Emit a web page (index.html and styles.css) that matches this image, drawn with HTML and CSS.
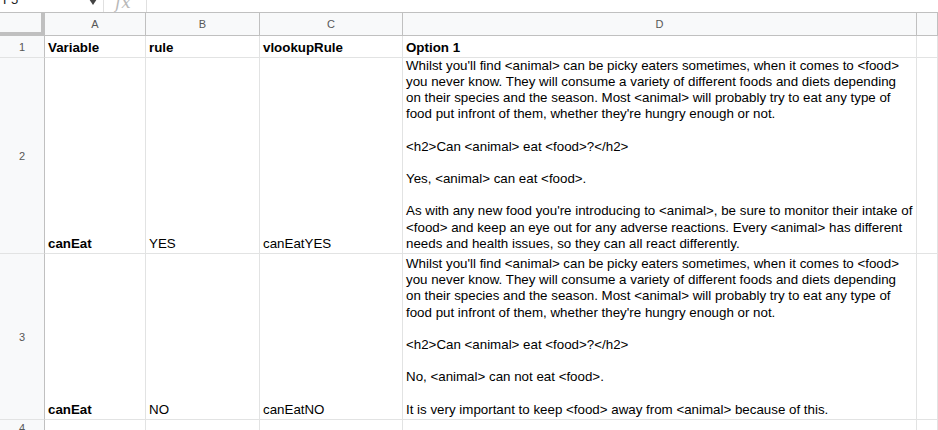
FILE: index.html
```html
<!DOCTYPE html>
<html>
<head>
<meta charset="utf-8">
<link rel="stylesheet" href="styles.css">
</head>
<body>
<div class="toolbar">
  <div class="namebox"><span class="name">F5</span><span class="caret"></span></div>
  <div class="fxbox"><span class="fx">fx</span></div>
  <div class="formula"></div>
</div>
<div class="grid">
  <div class="corner"></div>
  <div class="ch">A</div>
  <div class="ch">B</div>
  <div class="ch">C</div>
  <div class="ch">D</div>
  <div class="ch"></div>

  <div class="rh">1</div>
  <div class="cell bold">Variable</div>
  <div class="cell bold">rule</div>
  <div class="cell bold">vlookupRule</div>
  <div class="cell bold">Option 1</div>
  <div class="cell"></div>

  <div class="rh">2</div>
  <div class="cell bold">canEat</div>
  <div class="cell">YES</div>
  <div class="cell">canEatYES</div>
  <div class="cell"><div class="wrap">Whilst you'll find &lt;animal&gt; can be picky eaters sometimes, when it comes to &lt;food&gt;
you never know. They will consume a variety of different foods and diets depending
on their species and the season. Most &lt;animal&gt; will probably try to eat any type of
food put infront of them, whether they're hungry enough or not.

&lt;h2&gt;Can &lt;animal&gt; eat &lt;food&gt;?&lt;/h2&gt;

Yes, &lt;animal&gt; can eat &lt;food&gt;.

As with any new food you're introducing to &lt;animal&gt;, be sure to monitor their intake of
&lt;food&gt; and keep an eye out for any adverse reactions. Every &lt;animal&gt; has different
needs and health issues, so they can all react differently.</div></div>
  <div class="cell"></div>

  <div class="rh">3</div>
  <div class="cell bold">canEat</div>
  <div class="cell">NO</div>
  <div class="cell">canEatNO</div>
  <div class="cell"><div class="wrap">Whilst you'll find &lt;animal&gt; can be picky eaters sometimes, when it comes to &lt;food&gt;
you never know. They will consume a variety of different foods and diets depending
on their species and the season. Most &lt;animal&gt; will probably try to eat any type of
food put infront of them, whether they're hungry enough or not.

&lt;h2&gt;Can &lt;animal&gt; eat &lt;food&gt;?&lt;/h2&gt;

No, &lt;animal&gt; can not eat &lt;food&gt;.

It is very important to keep &lt;food&gt; away from &lt;animal&gt; because of this.</div></div>
  <div class="cell"></div>

  <div class="rh r4">4</div>
  <div class="cell"></div>
  <div class="cell"></div>
  <div class="cell"></div>
  <div class="cell"></div>
  <div class="cell"></div>
</div>
</body>
</html>
```
FILE: styles.css
```css
* { box-sizing: border-box; }
html, body { margin: 0; padding: 0; background: #fff; overflow: hidden; }
body { font-family: "Liberation Sans", Arial, sans-serif; color: #000; }

.toolbar {
  height: 13px;
  border-bottom: 1px solid #c0c0c0;
  display: flex;
  overflow: hidden;
}
.namebox {
  width: 104px;
  border-right: 1px solid #e0e0e0;
  position: relative;
  overflow: hidden;
}
.name {
  display: block;
  margin-top: -7px;
  padding-left: 3px;
  font-size: 13px;
  line-height: 14px;
  color: #222;
}
.caret {
  position: absolute;
  left: 89px;
  top: -1px;
  width: 0;
  height: 0;
  border-left: 4px solid transparent;
  border-right: 4px solid transparent;
  border-top: 6px solid #444;
}
.fxbox {
  width: 43px;
  border-right: 1px solid #e0e0e0;
  overflow: hidden;
}
.fx {
  display: block;
  margin-top: -7px;
  padding-left: 11px;
  font-family: "DejaVu Serif", "Liberation Serif", serif;
  font-style: italic;
  font-size: 17px;
  line-height: 18px;
  color: #b8b8b8;
}
.formula { flex: 1; }

.grid {
  display: grid;
  grid-template-columns: 45px 101px 114px 143px 514px 1fr;
  grid-template-rows: 23px 22px 196px 166px 22px;
}
.corner {
  background: #f8f9fa;
  border-right: 4px solid #c0c0c0;
  border-bottom: 4px solid #c0c0c0;
}
.ch {
  background: #f8f9fa;
  border-right: 1px solid #c0c0c0;
  border-bottom: 1px solid #c0c0c0;
  display: flex;
  align-items: center;
  justify-content: center;
  font-size: 11px;
  color: #575757;
}
.rh {
  background: #f8f9fa;
  border-right: 1px solid #c0c0c0;
  border-bottom: 1px solid #e2e3e3;
  display: flex;
  align-items: center;
  justify-content: center;
  font-size: 11px;
  color: #575757;
}
.rh.r4 { align-items: flex-start; padding-top: 2px; }
.cell {
  border-right: 1px solid #e2e3e3;
  border-bottom: 1px solid #e2e3e3;
  display: flex;
  align-items: flex-end;
  padding: 0 3px 1px 3px;
  font-size: 13.33px;
  line-height: 16.2px;
  white-space: nowrap;
  overflow: hidden;
}
.bold { font-weight: bold; }
.wrap { white-space: pre; }
```
